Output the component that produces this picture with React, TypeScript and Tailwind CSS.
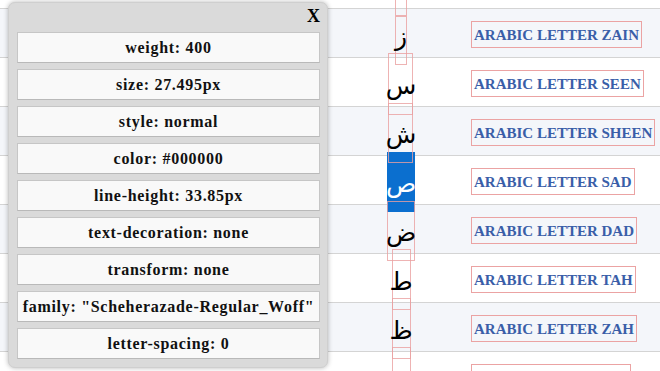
import React from "react";

const props = [
  "weight: 400",
  "size: 27.495px",
  "style: normal",
  "color: #000000",
  "line-height: 33.85px",
  "text-decoration: none",
  "transform: none",
  'family: "Scheherazade-Regular_Woff"',
  "letter-spacing: 0",
];

const rows = [
  { ch: "ز", name: "ARABIC LETTER ZAIN" },
  { ch: "س", name: "ARABIC LETTER SEEN" },
  { ch: "ش", name: "ARABIC LETTER SHEEN" },
  { ch: "ص", name: "ARABIC LETTER SAD", sel: true },
  { ch: "ض", name: "ARABIC LETTER DAD" },
  { ch: "ط", name: "ARABIC LETTER TAH" },
  { ch: "ظ", name: "ARABIC LETTER ZAH" },
  { ch: "", name: "ARABIC LETTER AIN" },
];

const boxes = [
  { x: 395, y: -1, w: 12, h: 17 },
  { x: 395, y: 16, w: 12, h: 49 },
  { x: 388, y: 53, w: 25, h: 62 },
  { x: 388, y: 103, w: 25, h: 60 },
  { x: 387, y: 201, w: 28, h: 60 },
  { x: 392, y: 249, w: 19, h: 61 },
  { x: 392, y: 298, w: 19, h: 61 },
  { x: 392, y: 347, w: 19, h: 40 },
];

export default function App() {
  return (
    <div className="relative w-[660px] h-[371px] overflow-hidden bg-white">
      {/* table */}
      <div className="flex flex-col">
        <div className="h-[9px] border-b border-[#d4d4d4] bg-white" />
        {rows.map((r, i) => (
          <div
            key={i}
            className={`h-[49px] border-b border-[#d4d4d4] flex items-center ${
              i % 2 === 0 ? "bg-[#f4f6fa]" : "bg-white"
            }`}
          >
            <div
              className={`relative z-10 ml-[373px] w-[56px] h-[34px] text-center text-[25px] leading-[34px] pt-[4px] ${
                r.sel ? "text-white" : "text-black"
              }`}
              style={{ fontFamily: '"DejaVu Sans", sans-serif' }}
            >
              {r.ch}
            </div>
            <div className="ml-[42px] pt-[2px]">
              <span
                className="inline-block border border-[#eba3a3] px-[2px] h-[27px] leading-[26px] text-[15px] font-bold text-[#3a5ea8]"
                style={{ fontFamily: '"Liberation Serif", serif' }}
              >
                {r.name}
              </span>
            </div>
          </div>
        ))}
      </div>

      {/* selection highlight */}
      <div className="absolute left-[387px] top-[152px] w-[28px] h-[60px] bg-[#0b6fcf]" />
      {/* glyph boxes */}
      {boxes.map((b, i) => (
        <div
          key={i}
          className="absolute border border-[#eaa0a0]/80"
          style={{ left: b.x, top: b.y, width: b.w, height: b.h }}
        />
      ))}

      {/* popup */}
      <div
        className="absolute left-[8px] top-[2px] w-[320px] h-[366px] rounded-[7px] bg-[#dadada] border border-[#cfcfcf] shadow-[0_0_5px_rgba(0,0,0,0.28)] z-20 flex flex-col"
        style={{ fontFamily: '"Liberation Serif", serif' }}
      >
        <div className="h-[29px] flex justify-end items-start pr-[7px] pt-[3px]">
          <span className="text-[18px] font-bold leading-[20px] text-black">X</span>
        </div>
        <div className="flex flex-col gap-[6px] pl-[8px] pr-[7px]">
          {props.map((p) => (
            <div
              key={p}
              className="h-[31px] bg-[#f9f9f9] border border-[#c6c6c6] border-b-[#b9b9b9] flex items-center justify-center text-[16px] font-bold tracking-[0.7px] text-[#111]"
            >
              {p}
            </div>
          ))}
        </div>
      </div>
    </div>
  );
}
